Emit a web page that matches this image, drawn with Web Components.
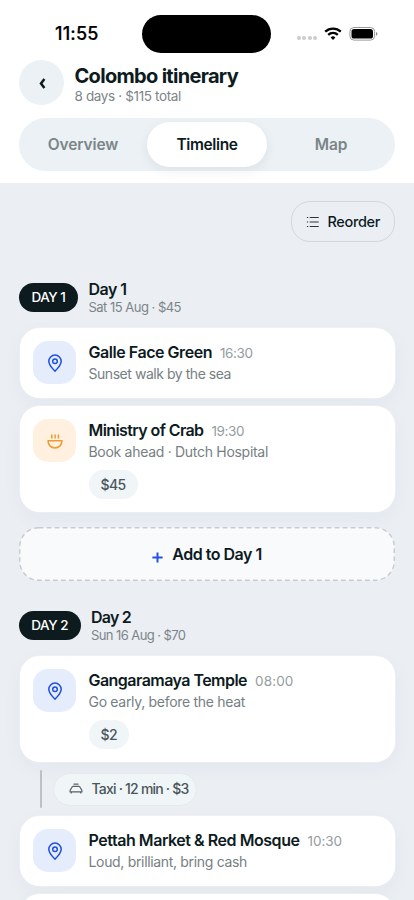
<!DOCTYPE html>
<html lang="en"><head><meta charset="utf-8"><title>Colombo itinerary</title>
<style>html,body{margin:0;height:900px;overflow:hidden;background:#ebeff4}body{font-family:Inter,"Noto Sans",sans-serif;color:#0d1b1e}</style></head>
<body><trip-app></trip-app>
<script>
const define=(name,html,setup)=>customElements.define(name,class extends HTMLElement{
  connectedCallback(){if(this.shadowRoot)return;const r=this.attachShadow({mode:'open'});
    r.innerHTML=typeof html==='function'?html(this):html;if(setup)setup(this,r);}
});
const a=(e,n,d='')=>e.getAttribute(n)||d;

// Single line of text whose tracking is adjusted to fill the width w.
define('fit-text',`<style>:host{display:block;white-space:nowrap;flex:none}span{display:inline-block}</style><span><slot></slot></span>`,(e,r)=>{
  const w=+a(e,'w'),s=r.querySelector('span'),n=e.textContent.length;
  s.style.letterSpacing='0px';
  const d=n?(w-s.getBoundingClientRect().width)/n:0;
  s.style.letterSpacing=d+'px';e.style.width=w+'px';
});

const icons={
 pin:`<svg width="24" height="24" viewBox="0 0 24 24" fill="none" stroke="#1f4fe0" stroke-width="1.5" stroke-linejoin="round"><path d="M12 20.2C9.4 17.6 5.8 14.200 5.8 10.300a6.200 6.200 0 0 1 12.400 0C18.200 14.200 14.600 17.600 12 20.200Z"/><circle cx="12" cy="10.300" r="2.300"/></svg>`,
 bowl:`<svg width="24" height="24" viewBox="0 0 24 24" fill="none" stroke="#f09a30" stroke-width="1.500" stroke-linejoin="round"><path d="M5 11.800H19C19 15.800 16 18.900 12 18.900S5 15.800 5 11.800ZM8.800 5.500v4M12.100 5.500v4M15.400 5.500v4"/></svg>`,
 list:`<svg width="14" height="14" viewBox="0 0 14 14" fill="none" stroke="#2b363b" stroke-width="1.200"><path d="M3.700 2.500H12.700M3.700 7H12.700M3.700 11.500H12.700M.9 2.500H2.200M.9 7H2.200M.9 11.500H2.200"/></svg>`,
 taxi:`<svg width="14" height="12" viewBox="0 0 14 12" fill="none" stroke="#596266" stroke-width="1.200" stroke-linejoin="round" stroke-linecap="round"><path d="M5 1.200H9M1.800 6.200L3.100 4Q3.500 3.300 4.300 3.300H9.700Q10.500 3.300 10.900 4L12.200 6.200Q12.900 6.800 12.900 7.700V8.900H1.100V7.700Q1.100 6.800 1.800 6.200ZM2.300 9V10M11.700 9V10"/></svg>`
};
define('app-icon',e=>`<style>:host{display:block;flex:none}svg{display:block}</style>${icons[a(e,'name')]}`);

define('status-bar',`<style>
:host{display:grid;grid-template-columns:142px 129px 1fr;height:60px;color:#000}
fit-text{margin:23px 0 0 55px;font-size:18px;line-height:22px;font-weight:500;-webkit-text-stroke:.2px #000}
.island{margin-top:14.500px;height:38px;border-radius:19px;background:#000}
.right{display:flex;padding:26px 0 0 26px;height:15px}
.dots{display:flex;gap:1.700px;margin-top:10.300px}.dots i{width:3.800px;height:3.800px;border-radius:50%;background:#ccc}
.wifi{margin-left:7px}.bat{margin-left:7px}
svg{display:block}
</style><fit-text w="43.500">11:55</fit-text><div class="island"></div>
<div class="right"><div class="dots"><i></i><i></i><i></i><i></i></div>
<svg class="wifi" width="18" height="15" viewBox="0 0 18 15" fill="none" stroke="#000" stroke-width="2.300"><path d="M1.200 5.700a11.200 11.200 0 0 1 15.600 0M4.200 8.900a6.900 6.900 0 0 1 9.600 0"/><path fill="#000" stroke="none" d="M9 14L6.600 11.500a3.500 3.500 0 0 1 4.800 0Z"/></svg>
<svg class="bat" width="29" height="15" viewBox="0 0 29 15"><rect x=".9" y="1.500" width="24.700" height="12.600" rx="4" fill="none" stroke="#999"/><rect x="2.500" y="3.100" width="21.500" height="9.400" rx="2.600"/><path d="M27 5.900q1.400.5 1.400 1.900t-1.400 1.900Z" fill="#888"/></svg></div>`);

define('trip-header',`<style>
:host{display:flex;padding:0 19px;height:58px;gap:10.500px}
.back{width:45px;height:45px;border-radius:50%;background:#ebf1f4;display:grid;place-items:center}
.t{font-size:20px;line-height:26px;font-weight:650;margin-top:2.500px}.s{font-size:13.500px;line-height:18px;color:#7b8588;font-weight:400;margin-top:-2px}
</style><div class="back"><svg width="10" height="14" viewBox="0 0 10 14" fill="none" stroke="#0d1b1e" stroke-width="2.500"><path d="M7.400 3L4 7.500L7.400 12"/></svg></div><div><fit-text class="t" w="163.500">Colombo itinerary</fit-text><fit-text class="s" w="106.500">8 days · $115 total</fit-text></div>`);

define('tab-bar',`<style>
:host{display:grid;grid-template-columns:124px 120px 124px;height:45px;padding:4px;margin:0 19px;border-radius:27px;background:#ebf1f4;font-size:15.500px;font-weight:600;line-height:20px;color:#7b8588}
div{display:grid;place-items:center;border-radius:23px}
div:first-of-type{padding-right:4px}div:last-of-type{padding-left:4px}
.on{background:#fff;color:#0d1b1e;box-shadow:0 4px 12px #1b303d12}
</style><div><fit-text w="70.500">Overview</fit-text></div><div class="on"><fit-text w="61">Timeline</fit-text></div><div><fit-text w="32.500">Map</fit-text></div>`);

define('reorder-button',`<style>
:host{box-sizing:border-box;display:flex;align-items:center;width:104.500px;height:41px;border:1px solid #d3d8dc;border-radius:19px;padding-left:14.500px;gap:7.500px;font-size:14.500px;font-weight:550;line-height:20px}
</style><app-icon name="list"></app-icon><fit-text w="52.500">Reorder</fit-text>`);

define('day-heading',e=>`<style>
:host{display:flex;align-items:center;gap:10.500px;height:36px}
.b{width:${a(e,'bw')}px;height:29px;border-radius:15px;background:#0d1b1e;color:#fff;display:grid;place-items:center;font-size:13.500px;font-weight:450;margin-top:2px}
.x{padding-top:2px}
.t{font-size:16px;font-weight:600;line-height:19px}.s{font-size:13px;font-weight:400;line-height:16px;color:#7b8588}
</style><div class="b"><fit-text w="${a(e,'lw')}">DAY ${a(e,'n')}</fit-text></div><div class="x"><fit-text class="t" w="${a(e,'tw')}">Day ${a(e,'n')}</fit-text><fit-text class="s" w="${a(e,'sw')}">${a(e,'sub')}</fit-text></div>`);

define('stop-card',e=>`<style>
:host{box-sizing:border-box;display:flex;gap:12.500px;padding:13px 13.500px;min-height:70px;border-radius:20px;background:#fff;box-shadow:0 6px 20px #2039480a,0 0 0 .5px #f5f7f8}
.i{width:43px;height:43px;border-radius:15px;background:${a(e,'icon')==='bowl'?'#fff0df':'#e5edfc'};display:grid;place-items:center;flex:none}
.r{display:flex;gap:8px;height:23px}.t{font-size:16px;font-weight:600;line-height:23px}.m{font-size:13.500px;line-height:25.500px;color:#949c9f}
.s{font-size:14px;line-height:20px;color:#768083}
.c{width:max-content;padding:0 12px;height:29px;border-radius:15px;background:#f0f5f8;display:flex;align-items:center;font-size:14px;font-weight:450;margin-top:8px;color:#4b565a}
</style><div class="i"><app-icon name="${a(e,'icon','pin')}"></app-icon></div><div><div class="r"><fit-text class="t" w="${a(e,'tw')}">${a(e,'name').replace('&','&amp;')}</fit-text><fit-text class="m" w="${a(e,'mw')}">${a(e,'time')}</fit-text></div><fit-text class="s" w="${a(e,'sw')}">${a(e,'note')}</fit-text>${a(e,'cost')?`<div class="c"><fit-text w="${a(e,'cw')}">${a(e,'cost')}</fit-text></div>`:''}</div>`);

define('add-stop',`<style>
:host{display:block;height:54px}
svg{display:block}.in{display:flex;height:54px;align-items:center;justify-content:center;gap:9px;font-size:16px;font-weight:600;line-height:20px;margin-top:-54px;position:relative}
.p{margin-top:6px}
</style><svg width="376" height="54"><rect x=".75" y=".75" width="374.500" height="52.500" rx="19" fill="#f8fafc" stroke="#c5cbcd" stroke-width="1.400" stroke-dasharray="4.500 3.500"/></svg>
<div class="in"><svg class="p" width="11" height="11" viewBox="0 0 11 11" stroke="#2450e4" stroke-width="2"><path d="M5.500.4V10.600M.4 5.500H10.600"/></svg><fit-text w="89.500">Add to Day 1</fit-text></div>`);

define('travel-leg',`<style>
:host{display:flex;height:38px;padding-left:20px;gap:11.500px;align-items:center}
.l{width:2px;height:38px;border-radius:1px;background:#bbc1c5}
.p{box-sizing:border-box;width:143.500px;height:33px;border:1px solid #e5e9ec;border-radius:17px;background:#f0f5f8;display:flex;align-items:center;gap:9px;padding-left:14.500px;font-size:14px;font-weight:450;line-height:18px;color:#4b565a}
</style><div class="l"></div><div class="p"><app-icon name="taxi"></app-icon><fit-text w="97">Taxi · 12 min · $3</fit-text></div>`);

define('trip-app',`<style>
:host{display:block;width:414px;height:900px;overflow:hidden;background:#ebeff4}
header{height:183px;background:#fff}
main{display:flex;flex-direction:column;padding:18px 19px 0}
reorder-button{align-self:flex-end}
.cards{display:flex;flex-direction:column;gap:8px;padding:0 .5px}
</style><header><status-bar></status-bar><trip-header></trip-header><tab-bar></tab-bar></header>
<main><reorder-button></reorder-button>
<day-heading style="margin-top:36px" n="1" bw="59" lw="34" tw="38" sw="92.500" sub="Sat 15 Aug · $45"></day-heading>
<div class="cards" style="margin-top:14px"><stop-card name="Galle Face Green" tw="123.500" time="16:30" mw="32.500" note="Sunset walk by the sea" sw="142.500"></stop-card>
<stop-card icon="bowl" name="Ministry of Crab" tw="115" time="19:30" mw="32.500" note="Book ahead · Dutch Hospital" sw="179.500" cost="$45" cw="25"></stop-card></div>
<add-stop style="margin-top:15px"></add-stop>
<day-heading style="margin-top:25px" n="2" bw="61.500" lw="37" tw="40" sw="94.500" sub="Sun 16 Aug · $70"></day-heading>
<div class="cards" style="margin-top:14px"><stop-card name="Gangaramaya Temple" tw="158.500" time="08:00" mw="38.500" note="Go early, before the heat" sw="156.500" cost="$2" cw="16.500"></stop-card>
<travel-leg></travel-leg>
<stop-card name="Pettah Market &amp; Red Mosque" tw="211" time="10:30" mw="34.500" note="Loud, brilliant, bring cash" sw="158.500"></stop-card>
<stop-card name="" tw="0" mw="0" sw="0"></stop-card></div></main>`);
</script></body></html>
